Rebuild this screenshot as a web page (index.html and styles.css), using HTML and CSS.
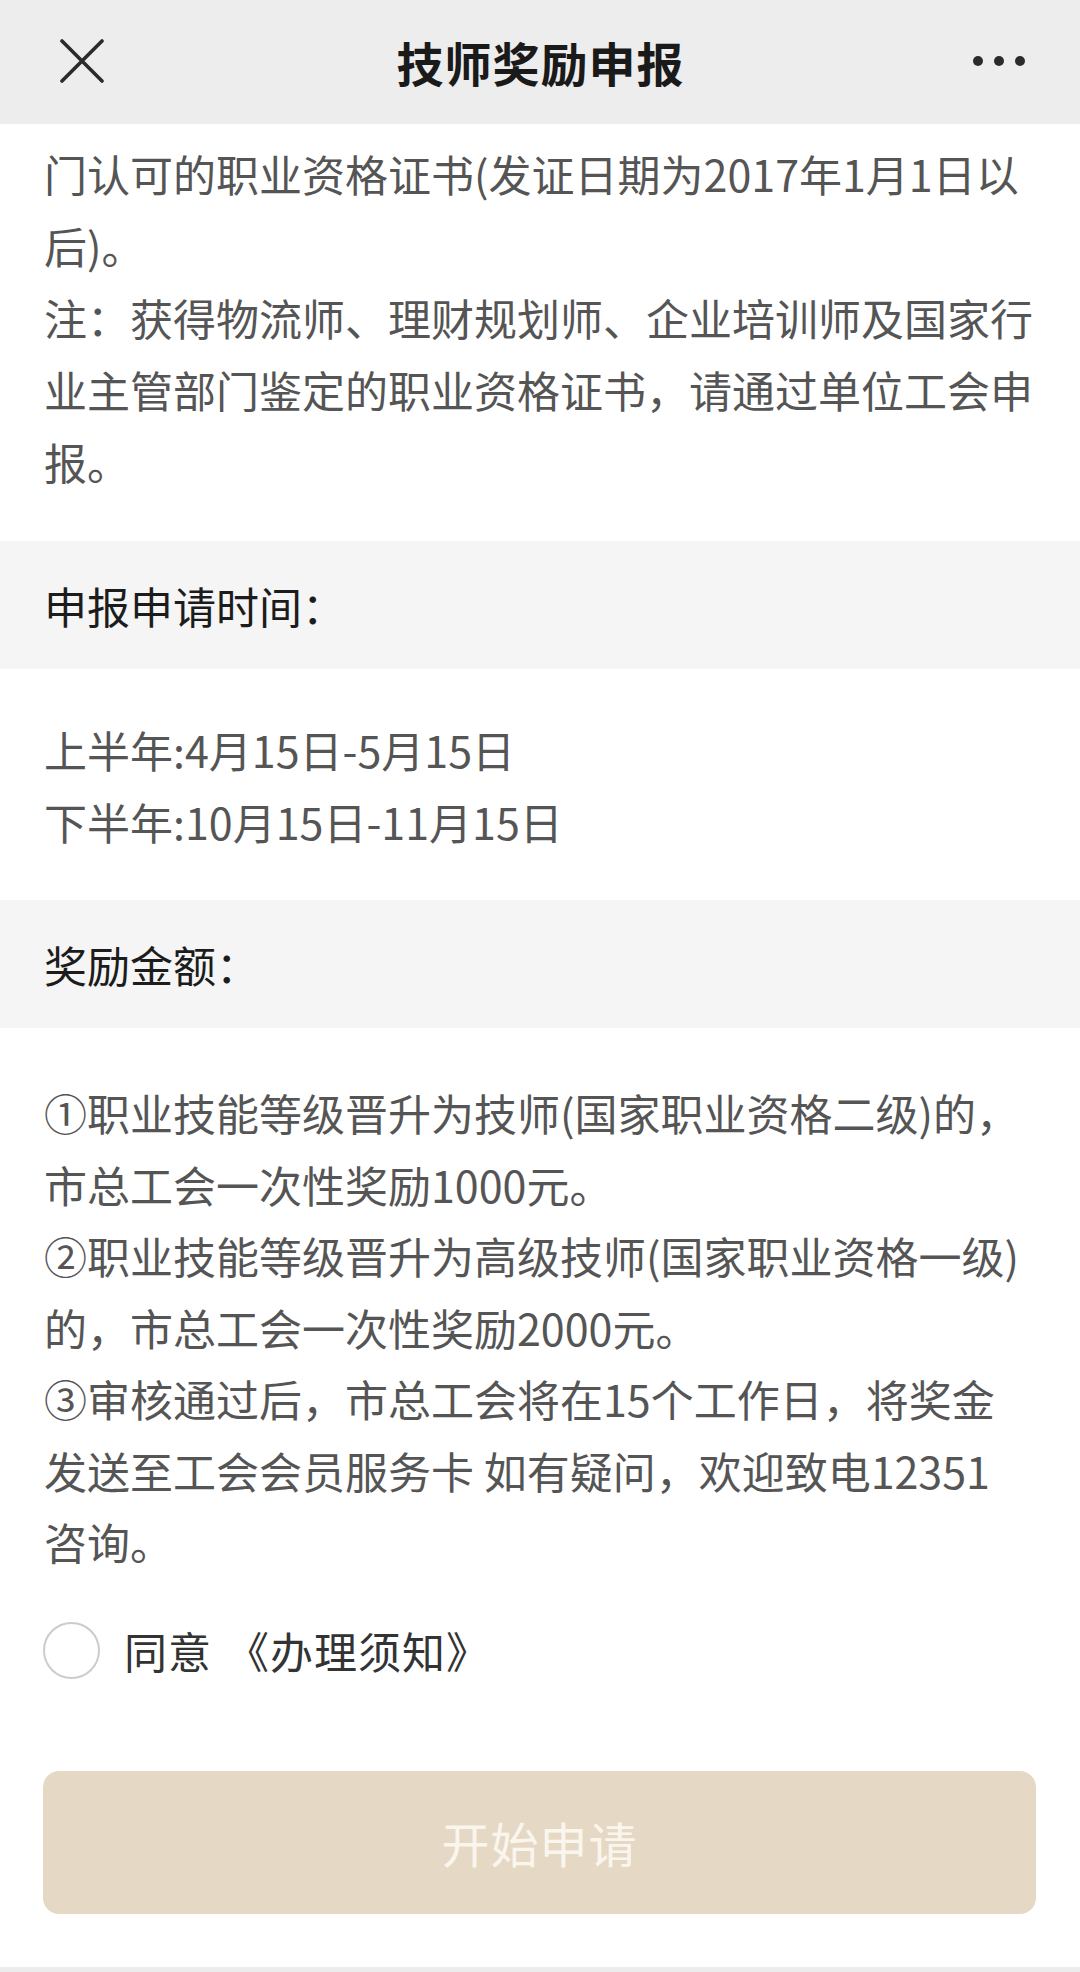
FILE: index.html
```html
<!DOCTYPE html>
<html lang="zh-CN">
<head>
<meta charset="utf-8">
<title>技师奖励申报</title>
<link rel="stylesheet" href="styles.css">
</head>
<body>
<div class="page">
  <header class="nav">
    <span class="nav-close" aria-label="关闭">
      <svg width="44" height="44" viewBox="0 0 44 44"><path d="M2 2 L42 42 M42 2 L2 42" stroke="#2b2b2b" stroke-width="3.6" stroke-linecap="round" fill="none"/></svg>
    </span>
    <h1 class="nav-title">技师奖励申报</h1>
    <span class="nav-more" aria-label="更多"><i></i><i></i><i></i></span>
  </header>

  <section class="block intro">
    <p>门认可的职业资格证书(发证日期为2017年1月1日以<br>后)。<br>注：获得物流师、理财规划师、企业培训师及国家行<br>业主管部门鉴定的职业资格证书，请通过单位工会申<br>报。</p>
  </section>

  <div class="band">申报申请时间：</div>

  <section class="block times">
    <p>上半年:4月15日-5月15日<br>下半年:10月15日-11月15日</p>
  </section>

  <div class="band">奖励金额：</div>

  <section class="block amount">
    <p>①职业技能等级晋升为技师(国家职业资格二级)的，<br>市总工会一次性奖励1000元。<br>②职业技能等级晋升为高级技师(国家职业资格一级)<br>的，市总工会一次性奖励2000元。<br>③审核通过后，市总工会将在15个工作日，将奖金<br>发送至工会会员服务卡 如有疑问，欢迎致电12351<br>咨询。</p>
  </section>

  <label class="agree">
    <span class="radio"></span>
    <span class="agree-text">同意<span class="bk-open">《</span>办理须知》</span>
  </label>

  <div class="actions">
    <button class="btn-apply" type="button">开始申请</button>
  </div>

  <div class="bottom-bar"></div>
</div>
</body>
</html>
```

FILE: styles.css
```css
* { box-sizing: border-box; margin: 0; padding: 0; }

html, body {
  background: #ffffff;
}

body {
  font-family: "Noto Sans CJK SC", "Noto Sans", sans-serif;
  color: #555555;
}

.page {
  width: 1080px;
  min-height: 1972px;
  display: flex;
  flex-direction: column;
  background: #ffffff;
}

.nav {
  height: 124px;
  background: #ededed;
  display: flex;
  align-items: center;
  justify-content: space-between;
  padding: 0 55px 2px 60px;
}

.nav-close {
  width: 44px;
  height: 44px;
  display: flex;
  align-items: center;
  justify-content: center;
}

.nav-title {
  font-size: 47px;
  font-weight: 700;
  color: #1a1a1a;
  letter-spacing: 1px;
  line-height: 1;
  padding-left: 4px;
}

.nav-more {
  display: flex;
  gap: 11px;
  align-items: center;
  width: 52px;
}

.nav-more i {
  display: block;
  width: 10px;
  height: 10px;
  border-radius: 50%;
  background: #2b2b2b;
}

.block {
  padding-left: 44px;
  padding-right: 20px;
  font-size: 43px;
  color: #555555;
  white-space: nowrap;
}

.intro {
  padding-top: 13px;
  padding-bottom: 44px;
  line-height: 72px;
}

.times {
  padding-top: 44px;
  padding-bottom: 43px;
  line-height: 72px;
}

.amount {
  padding-top: 49px;
  line-height: 71.5px;
}

.band {
  height: 128px;
  background: #f5f5f5;
  display: flex;
  align-items: center;
  padding-left: 44px;
  font-size: 43px;
  color: #1c1c1c;
}

.agree {
  display: flex;
  align-items: center;
  gap: 24px;
  margin-top: 44px;
  padding-left: 43px;
  height: 57px;
}

.radio {
  width: 57px;
  height: 57px;
  border-radius: 50%;
  border: 2.5px solid #cccccc;
  background: #ffffff;
}

.agree-text {
  font-size: 43px;
  color: #333333;
  line-height: 1;
  letter-spacing: 1px;
}

.agree-text .bk-open {
  display: inline-block;
  margin-left: 14px;
}

.actions {
  padding: 92px 44px 0 43px;
}

.btn-apply {
  display: block;
  width: 100%;
  height: 143px;
  border: none;
  border-radius: 16px;
  background: #e5d9c6;
  color: #faf6ee;
  font-family: "Noto Sans CJK SC", "Noto Sans", sans-serif;
  font-size: 48px;
  letter-spacing: 1px;
}

.bottom-bar {
  margin-top: auto;
  height: 5px;
  background: #ececec;
}
```
